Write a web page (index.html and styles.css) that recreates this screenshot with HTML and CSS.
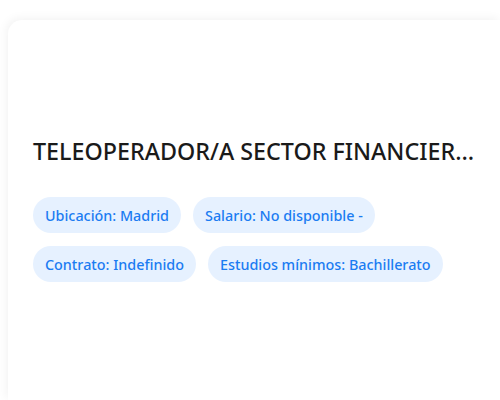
FILE: index.html
```html
<!DOCTYPE html>
<html lang="es">
<head>
<meta charset="utf-8">
<link rel="stylesheet" href="styles.css">
</head>
<body>
<div class="page">
  <div class="card">
    <h2 class="title">TELEOPERADOR/A SECTOR FINANCIER…</h2>
    <div class="chips">
      <span class="chip">Ubicación: Madrid</span>
      <span class="chip">Salario: No disponible -</span>
      <span class="chip">Contrato: Indefinido</span>
      <span class="chip">Estudios mínimos: Bachillerato</span>
    </div>
  </div>
</div>
</body>
</html>
```
FILE: styles.css
```css
html, body {
  margin: 0;
  padding: 0;
  background: #ffffff;
  overflow: hidden;
}
.page {
  padding: 20px 0 0 8px;
  width: 500px;
  height: 400px;
  box-sizing: border-box;
}
.card {
  width: 492px;
  height: 380px;
  background: #ffffff;
  border-radius: 14px 0 0 0;
  box-shadow: -2px -2px 10px rgba(0, 0, 0, 0.05);
  padding: 116px 0 0 25px;
  box-sizing: border-box;
  font-family: "Noto Sans", "Open Sans", sans-serif;
}
.title {
  margin: 0;
  font-size: 23.3px;
  font-weight: 500;
  color: #1a1a1a;
  white-space: nowrap;
  line-height: 30px;
}
.chips {
  display: flex;
  flex-wrap: wrap;
  gap: 13px 12px;
  margin-top: 31px;
  width: 440px;
}
.chip {
  display: inline-flex;
  align-items: center;
  height: 36px;
  padding: 0 12px;
  border-radius: 18px;
  background: #e6f1ff;
  color: #1b7cf2;
  font-size: 14.35px;
  font-weight: 500;
}
.chip:nth-child(2) { margin-right: 60px; }
```
